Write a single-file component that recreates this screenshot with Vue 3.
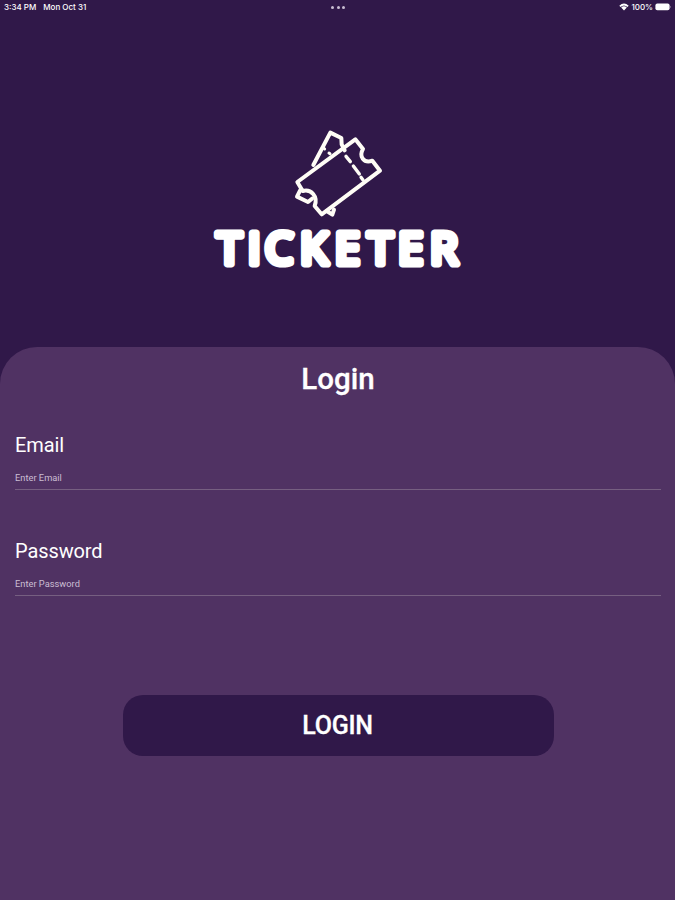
<script setup>
import { ref } from 'vue'

const fields = ref([
  { id: 'email', label: 'Email', placeholder: 'Enter Email', type: 'text', value: '' },
  { id: 'password', label: 'Password', placeholder: 'Enter Password', type: 'password', value: '' },
])
</script>

<template>
  <div class="screen">
    <header class="status">
      <div class="left"><span>3:34 PM</span><span>Mon Oct 31</span></div>
      <div class="dots"><i></i><i></i><i></i></div>
      <div class="right">
        <svg class="wifi" viewBox="0 0 10 8">
          <path d="M0.3 2.7 Q5 -1.6 9.7 2.7 L8.5 3.9 Q5 0.9 1.5 3.9Z M2.2 4.6 Q5 2.1 7.8 4.6 L5 7.5Z" fill="#fff" />
        </svg>
        <span>100%</span>
        <svg class="battery" viewBox="0 0 17 8">
          <rect x="0.4" y="0.6" width="14.2" height="6.6" rx="2" fill="#fff" />
          <path d="M15.4 2.7 Q16.6 3.9 15.4 5.1Z" fill="#d8cfe0" />
        </svg>
      </div>
    </header>

    <div class="brand">
      <svg class="ticket" viewBox="0 0 345 315" fill="none" stroke="#fffdf6" stroke-width="12" stroke-linejoin="round" stroke-linecap="round">
        <path d="M100 135 L151 38 L184 54 L185 73 L194 91" />
        <path d="M131 84 L134 87 M147 99 L150 101" stroke-width="9" />
        <path d="M52 186 L226 58 L249 87 C236 109 251 131 277 122 L300 152 L125 283 L104 258 C115 229 93 206 68 213 Z" />
        <path d="M198 109 L211 125 M220 138 L238 162 M243 172 L249 180" stroke-width="10" />
        <path d="M60 212 L51 230 L84 246 L96 236" />
        <path d="M140 273 L157 284 L162 269" />
      </svg>
      <svg class="wordmark" viewBox="197 212 280 72">
        <text x="215.9 247 264 299.3 334 367 397.2 429.2" y="264.2">TICKETER</text>
      </svg>
    </div>

    <main class="panel">
      <h1>Login</h1>
      <label v-for="f in fields" :key="f.id" class="field">
        <span class="label">{{ f.label }}</span>
        <input v-model="f.value" :type="f.type" :placeholder="f.placeholder" />
      </label>
      <button type="button">LOGIN</button>
    </main>
  </div>
</template>

<style>
body {
  background: #301849;
}
</style>

<style scoped>
.screen {
  width: 675px;
  height: 900px;
  display: flex;
  flex-direction: column;
  background: #301849;
  color: #fff;
  font-family: Roboto, sans-serif;
  overflow: hidden;
}
.status {
  height: 14px;
  flex: none;
  box-sizing: border-box;
  padding: 0 3px 0 4px;
  display: grid;
  grid-template-columns: 1fr auto 1fr;
  align-items: center;
  font: 500 8px/14px Inter, sans-serif;
}
.left {
  display: flex;
  gap: 7px;
}
.dots {
  display: flex;
  gap: 2.5px;
}
.dots i {
  width: 3px;
  height: 3px;
  border-radius: 50%;
  background: #c9bdd2;
}
.right {
  display: flex;
  justify-content: flex-end;
  align-items: center;
  gap: 2px;
}
.wifi {
  width: 10px;
  height: 8px;
}
.battery {
  width: 17px;
  height: 8px;
}
.brand {
  height: 333px;
  flex: none;
  box-sizing: border-box;
  padding-top: 106px;
  display: flex;
  flex-direction: column;
  align-items: center;
}
.ticket {
  width: 115px;
  height: 105px;
  flex: none;
}
.wordmark {
  width: 280px;
  height: 72px;
  flex: none;
  margin-top: -13px;
  overflow: visible;
}
.wordmark text {
  font-family: "Open Sans", sans-serif;
  font-size: 44.5px;
  font-weight: 400;
  fill: #fff;
  stroke: #fff;
  stroke-width: 7.2px;
  stroke-linejoin: round;
}
.panel {
  flex: 1;
  box-sizing: border-box;
  padding: 14px 14px 0 15px;
  display: flex;
  flex-direction: column;
  background: #503263;
  border-radius: 37px 37px 0 0;
}
h1 {
  margin: 0 0 35px;
  font-size: 29.5px;
  line-height: 36px;
  font-weight: 500;
  text-align: center;
  -webkit-text-stroke: 0.3px #fff;
}
.field {
  height: 106px;
  display: flex;
  flex-direction: column;
}
.label {
  font-size: 20px;
  line-height: 26px;
  letter-spacing: -0.1px;
}
input {
  height: 25px;
  margin-top: 7px;
  padding: 1px 0 0;
  box-sizing: border-box;
  width: 100%;
  border: 0;
  border-bottom: 1px solid #765f81;
  border-radius: 0;
  outline: none;
  background: transparent;
  color: #fff;
  font: 9.3px/12px Roboto, sans-serif;
}
input::placeholder {
  color: #cbbed3;
  opacity: 1;
}
button {
  width: 431px;
  height: 61px;
  margin: 51px auto 0;
  padding: 0 1px 0 0;
  border: 0;
  border-radius: 20px;
  background: #301849;
  color: #fff;
  font: 500 25px/61px Roboto, sans-serif;
  letter-spacing: -0.3px;
  -webkit-text-stroke: 0.3px #fff;
}
</style>
